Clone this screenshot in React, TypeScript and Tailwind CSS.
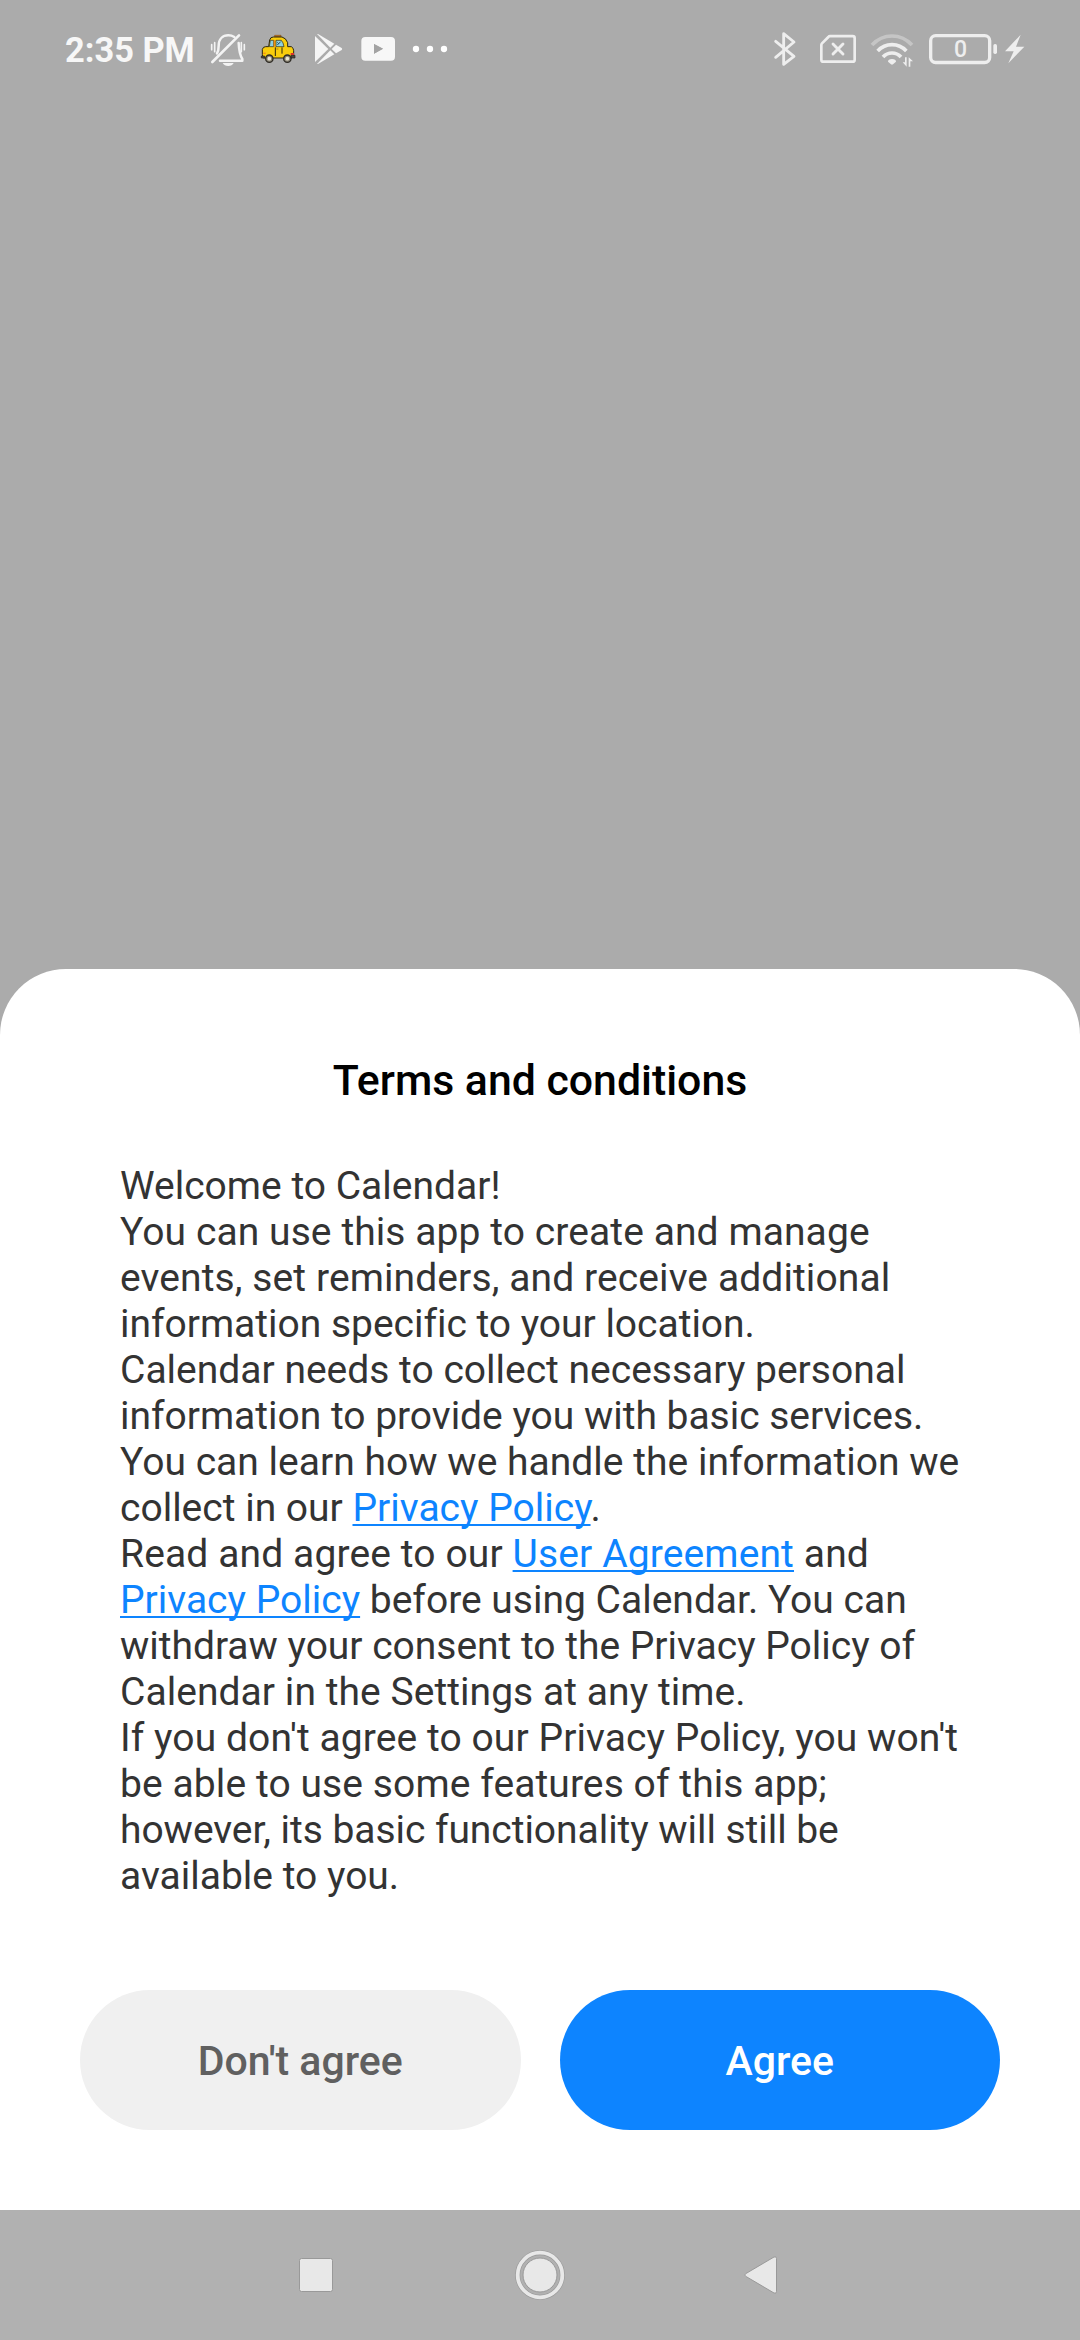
import type { ReactNode } from "react";

function Glyph({ box, className, children }: { box: string; className: string; children: ReactNode }) {
  return (
    <svg viewBox={box} className={`h-9 shrink-0 ${className}`} fill="none" aria-hidden="true">
      {children}
    </svg>
  );
}

function BellOff() {
  return (
    <Glyph box="474 36 120 108" className="ml-[15px] w-10 text-[#f3f3f3]">
      <g stroke="currentColor" strokeWidth="7.5" strokeLinecap="round" strokeLinejoin="round">
        <path d="M501 100C506 92 506 84 506 77C506 57 518 46 535 46C542 46 548 48 553 51" />
        <path d="M566 69C567 92 569 104 577 117V122H510" />
        <path d="M487 126L567 46" strokeWidth="8" />
        <path d="M485 74V89M494 68V95M574 68V95M583 74V89" strokeWidth="5" />
      </g>
      <path d="M518 129H551C548 135 542 138 535 138C527 138 521 135 518 129Z" fill="currentColor" />
    </Glyph>
  );
}

function Taxi() {
  return (
    <Glyph box="174 36 120 108" className="ml-2.5 w-10">
      <path d="M224 50V46H243V50Z" fill="#f28c1a" stroke="#7a4a10" strokeWidth="2" />
      <path
        d="M206 80L209 60Q211 51 220 51H246Q258 54 263 68V80H274Q281 84 281 92V105L276 114H190Q187 110 187 103V88Q189 80 197 80Z"
        fill="#f9cd0c"
        stroke="#2c2710"
        strokeWidth="3"
      />
      <path d="M208 80L211 61H221V80Z" fill="#8fd0dc" stroke="#2c2710" strokeWidth="2" />
      <path d="M221 61H226V80H221Z" fill="#ee8a12" />
      <path d="M228 80V61H244Q250 67 252 80Z" fill="#8fd0dc" stroke="#2c2710" strokeWidth="2" />
      <path d="M232 75L242 65M232 67L236 71" stroke="#224858" strokeWidth="3" />
      <path d="M226 82V108M246 82V101" stroke="#2c2710" strokeWidth="3" />
      <path d="M229 87H235" stroke="#7a5a08" strokeWidth="2" />
      <path d="M184 108H194V114H184ZM273 106H285V114H273Z" fill="#4b4640" stroke="#222" strokeWidth="2" />
      <path d="M272 99H282V105H272Z" fill="#d8322c" />
      <path d="M190 100H197" stroke="#f28c1a" strokeWidth="4" />
      <g stroke="#2f2c26" strokeWidth="4" fill="#8c8676">
        <circle cx="208" cy="116" r="11" />
        <circle cx="262" cy="116" r="11" />
      </g>
      <g fill="#e9e4d2">
        <circle cx="208" cy="116" r="5.5" />
        <circle cx="262" cy="116" r="5.5" />
      </g>
    </Glyph>
  );
}

function PlayStore() {
  return (
    <Glyph box="36 36 96 108" className="ml-3.5 w-8 text-[#f5f5f5]">
      <g fill="currentColor">
        <path d="M45 48L85 87L45 126Z" />
        <path d="M51 42L54 42L103 71L91 83Z" />
        <path d="M51 132L54 132L103 103L91 91Z" />
        <path d="M108 74L125 84Q128 87 125 90L108 100L95 87Z" />
      </g>
    </Glyph>
  );
}

function YouTube() {
  return (
    <Glyph box="180 36 108 108" className="ml-4 w-9 text-[#f7f7f7]">
      <path
        d="M196 51H273Q285 51 285 63V110Q285 122 273 122H196Q184 122 184 110V63Q184 51 196 51ZM222 72V101L249 86.500Z"
        fill="currentColor"
        fillRule="evenodd"
      />
      <path d="M222 72L249 86.500L222 101Z" fill="#a3a3a3" />
    </Glyph>
  );
}

function More() {
  return (
    <Glyph box="336 36 108 108" className="ml-4 w-9 text-white">
      <g fill="currentColor">
        <circle cx="348" cy="87" r="9.500" />
        <circle cx="390" cy="87" r="9.500" />
        <circle cx="432" cy="87" r="9.500" />
      </g>
    </Glyph>
  );
}

function Bluetooth() {
  return (
    <Glyph box="36 36 78 108" className="w-[26px] text-[#eeeeee]">
      <path
        d="M47 64L102 109L71 133V41L102 66L47 112"
        stroke="currentColor"
        strokeWidth="8.500"
        strokeLinecap="round"
        strokeLinejoin="round"
      />
    </Glyph>
  );
}

function NoSim() {
  return (
    <Glyph box="174 36 120 108" className="ml-5 w-10 text-[#eeeeee]">
      <path
        d="M210 48.500H278Q284 48.500 284 54.500V119Q284 125 278 125H190Q184 125 184 119V75Q184 72 186 70L205 51Q207 48.500 210 48.500Z"
        stroke="currentColor"
        strokeWidth="8"
      />
      <path d="M219 72L249 102M249 72L219 102" stroke="currentColor" strokeWidth="8.500" strokeLinecap="round" />
    </Glyph>
  );
}

function Wifi() {
  return (
    <Glyph box="330 36 132 108" className="ml-3 w-11 text-[#eeeeee]">
      <g stroke="currentColor" strokeWidth="11">
        <path d="M336 75Q361 48 396 48T456 75" strokeOpacity="0.4" />
        <path d="M353 93Q371 74 396 74T439 93" />
        <path d="M369 111Q380 99 396 99T423 111" />
      </g>
      <path d="M384 125Q384 117 396 117T408 125L399 133Q396 135 393 133Z" fill="currentColor" />
      <path d="M435 112H440V140L428 127H435Z" fill="currentColor" />
      <path d="M446 112L459 124H451V140H446Z" fill="currentColor" />
    </Glyph>
  );
}

function Battery() {
  return (
    <div className="relative ml-3.5 flex w-[70px] items-center">
      <Glyph box="84 36 210 108" className="w-[70px] text-[#eeeeee]">
        <rect x="92" y="47" width="177" height="80.500" rx="15" stroke="currentColor" strokeWidth="10" />
        <rect x="280" y="72" width="11" height="30" rx="5" fill="currentColor" />
      </Glyph>
      <span className="absolute inset-y-0 left-0 w-[65px] text-center text-[23px] leading-9 font-medium text-[#eeeeee]">0</span>
    </div>
  );
}

function Bolt() {
  return (
    <Glyph box="312 36 66 108" className="ml-1.5 w-[22px] text-[#eeeeee]">
      <path d="M362 44L315 94H341L325 130L373 80H348Z" fill="currentColor" />
    </Glyph>
  );
}

function StatusBar() {
  return (
    <header className="flex h-[100px] items-center justify-between pr-[54px] pl-[65px]">
      <div className="flex items-center">
        <span className="w-32 pt-px text-[34.4px] leading-none font-bold whitespace-nowrap text-[#f7f7f7]">2:35 PM</span>
        <BellOff />
        <Taxi />
        <PlayStore />
        <YouTube />
        <More />
      </div>
      <div className="flex items-center">
        <Bluetooth />
        <NoSim />
        <Wifi />
        <Battery />
        <Bolt />
      </div>
    </header>
  );
}

function Link({ children }: { children: ReactNode }) {
  return (
    <a
      href="#"
      className="text-[#0d84ff] underline decoration-2 underline-offset-[3px] [text-decoration-skip-ink:none]"
    >
      {children}
    </a>
  );
}

function TermsSheet() {
  return (
    <section className="flex h-[1241px] flex-col rounded-t-[66px] bg-white">
      <h1 className="mt-[86px] text-center text-[42.8px] leading-[50px] font-medium text-black">Terms and conditions</h1>
      <div className="mt-[58px] ml-[120px] text-[39px] leading-[46px] whitespace-nowrap text-[#333333]">
        <p>Welcome to Calendar!</p>
        <p className="tracking-[0.08px]">You can use this app to create and manage</p>
        <p className="tracking-[0.1px]">events, set reminders, and receive additional</p>
        <p className="tracking-[-0.02px]">information specific to your location.</p>
        <p>Calendar needs to collect necessary personal</p>
        <p className="tracking-[-0.02px]">information to provide you with basic services.</p>
        <p className="tracking-[0.02px]">You can learn how we handle the information we</p>
        <p>
          collect in our <Link>Privacy Policy</Link>.
        </p>
        <p className="tracking-[0.12px]">
          Read and agree to our <Link>User Agreement</Link> and
        </p>
        <p>
          <Link>Privacy Policy</Link> before using Calendar. You can
        </p>
        <p className="tracking-[-0.02px]">withdraw your consent to the Privacy Policy of</p>
        <p className="tracking-[0.05px]">Calendar in the Settings at any time.</p>
        <p className="tracking-[0.08px]">If you don't agree to our Privacy Policy, you won't</p>
        <p className="tracking-[0.09px]">be able to use some features of this app;</p>
        <p className="tracking-[-0.05px]">however, its basic functionality will still be</p>
        <p>available to you.</p>
      </div>
      <div className="mt-auto mb-20 grid grid-cols-2 gap-[39px] px-20">
        <button className="h-[140px] rounded-full bg-[#f0f0f0] pt-1 text-[41px] font-medium text-[#606060]">
          Don't agree
        </button>
        <button className="h-[140px] rounded-full bg-[#0d84ff] pt-1 text-[41px] font-medium text-white">Agree</button>
      </div>
    </section>
  );
}

function NavBar() {
  return (
    <nav className="flex h-[130px] items-center justify-center bg-[#b1b1b1]">
      <svg viewBox="0 0 52 52" className="w-[52px]" fill="#e8e8e8" stroke="#999999">
        <rect x="9.500" y="9.500" width="33" height="33" rx="2" />
      </svg>
      <svg viewBox="0 0 52 52" className="mx-[172px] w-[52px]" fill="none">
        <circle cx="26" cy="26" r="22.300" stroke="#999999" strokeWidth="5" />
        <circle cx="26" cy="26" r="22.300" stroke="#e8e8e8" strokeWidth="3.800" />
        <circle cx="26" cy="26" r="17" fill="#e8e8e8" stroke="#999999" />
      </svg>
      <svg viewBox="0 0 52 52" className="w-[52px]" fill="#e8e8e8" stroke="#999999">
        <path d="M7.500 24.800L36 8Q38.500 7 38.500 9.500V42.500Q38.500 45 36 44L7.500 27.200Q6 26 7.500 24.800Z" />
      </svg>
    </nav>
  );
}

export default function App() {
  return (
    <main className="flex h-[2340px] w-[1080px] flex-col overflow-hidden bg-[#ababab] font-['Roboto',sans-serif]">
      <StatusBar />
      <div className="flex-1" />
      <TermsSheet />
      <NavBar />
    </main>
  );
}
